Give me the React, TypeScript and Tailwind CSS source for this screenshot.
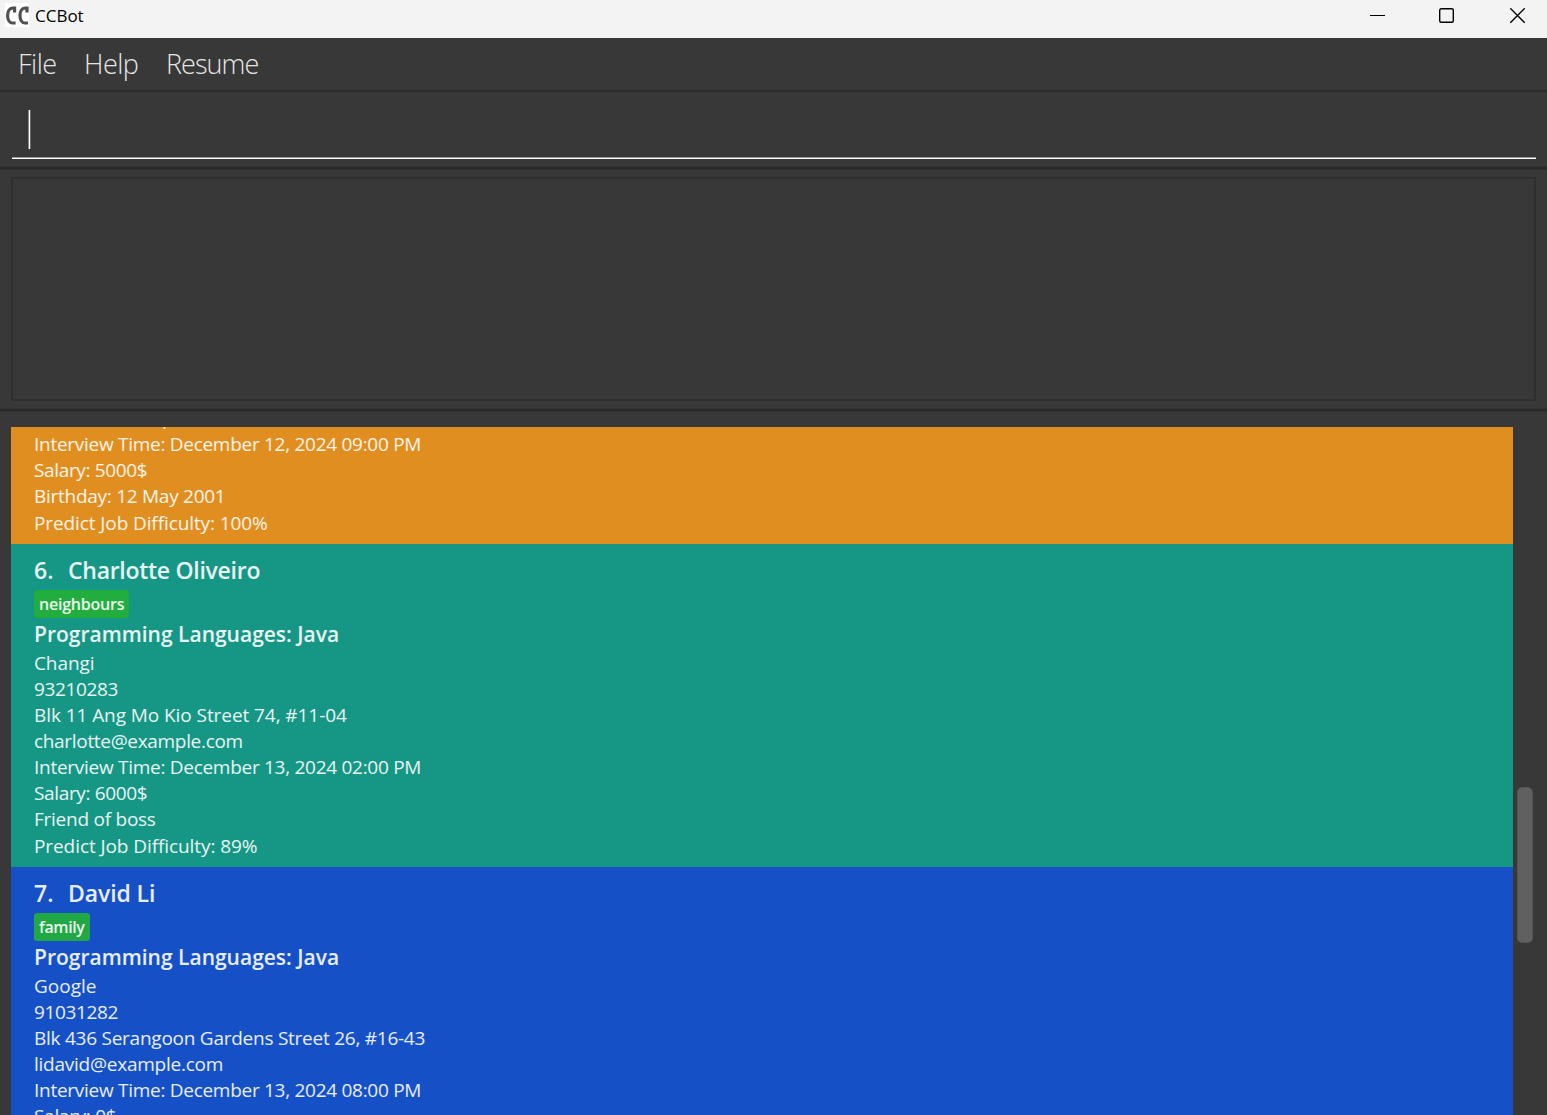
type Line = { text: string; tracking: string };

type Person = {
  id: number;
  name: string;
  nameTracking: string;
  tag: string;
  tagStyle: string;
  color: string;
  fields: Line[];
  difficulty?: Line;
};

const previousFields: Line[] = [
  { text: 'bernice@example.com', tracking: 'tracking-[-0.33px]' },
  { text: 'Interview Time: December 12, 2024 09:00 PM', tracking: 'tracking-[-0.28px]' },
  { text: 'Salary: 5000$', tracking: 'tracking-[-0.35px]' },
  { text: 'Birthday: 12 May 2001', tracking: 'tracking-[-0.27px]' },
];

const people: Person[] = [
  {
    id: 6,
    name: 'Charlotte Oliveiro',
    nameTracking: 'tracking-[-0.28px]',
    tag: 'neighbours',
    tagStyle: 'bg-[#22ad3f] tracking-[-0.22px]',
    color: 'bg-[#169684]',
    fields: [
      { text: 'Changi', tracking: 'tracking-[-0.1px]' },
      { text: '93210283', tracking: 'tracking-[-0.36px]' },
      { text: 'Blk 11 Ang Mo Kio Street 74, #11-04', tracking: 'tracking-[-0.07px]' },
      { text: 'charlotte@example.com', tracking: 'tracking-[-0.32px]' },
      { text: 'Interview Time: December 13, 2024 02:00 PM', tracking: 'tracking-[-0.28px]' },
      { text: 'Salary: 6000$', tracking: 'tracking-[-0.35px]' },
      { text: 'Friend of boss', tracking: 'tracking-[-0.25px]' },
    ],
    difficulty: { text: 'Predict Job Difficulty: 89%', tracking: 'tracking-[-0.08px]' },
  },
  {
    id: 7,
    name: 'David Li',
    nameTracking: 'tracking-[-0.1px]',
    tag: 'family',
    tagStyle: 'bg-[#22a745] tracking-[-0.38px]',
    color: 'bg-[#1650c6]',
    fields: [
      { text: 'Google', tracking: 'tracking-[0px]' },
      { text: '91031282', tracking: 'tracking-[-0.36px]' },
      { text: 'Blk 436 Serangoon Gardens Street 26, #16-43', tracking: 'tracking-[-0.25px]' },
      { text: 'lidavid@example.com', tracking: 'tracking-[-0.24px]' },
      { text: 'Interview Time: December 13, 2024 08:00 PM', tracking: 'tracking-[-0.28px]' },
      { text: 'Salary: 0$', tracking: 'tracking-[-0.3px]' },
    ],
  },
];

function Fields({ lines, difficulty }: { lines: Line[]; difficulty?: Line }) {
  return (
    <div className="flex shrink-0 flex-col text-[19px] leading-[26px]">
      {lines.map((l) => (
        <div key={l.text} className={`whitespace-pre ${l.tracking}`}>
          {l.text}
        </div>
      ))}
      {difficulty && <div className={`whitespace-pre pt-px ${difficulty.tracking}`}>{difficulty.text}</div>}
    </div>
  );
}

function Card({ person }: { person: Person }) {
  return (
    <section className={`h-[323px] shrink-0 overflow-hidden pl-[23px] pt-[9px] text-white/90 ${person.color}`}>
      <h2 className="flex h-[37px] text-[23px] font-semibold leading-[34px]">
        <span className="w-[34px]">{person.id}.</span>
        <span className={person.nameTracking}>{person.name}</span>
      </h2>
      <div className="flex h-7">
        <span className={`rounded-[3px] px-[5px] text-[16px] font-semibold leading-7 ${person.tagStyle}`}>{person.tag}</span>
      </div>
      <h3 className="h-8 text-[21px] font-semibold leading-8">Programming Languages: Java</h3>
      <Fields lines={person.fields} difficulty={person.difficulty} />
    </section>
  );
}

function Divider() {
  return <div className="h-1 shrink-0 border-y border-b-[#303030] border-t-[#333333] bg-[#2a2a2a]" />;
}

export default function App() {
  return (
    <div className="flex h-[1115px] w-[1547px] flex-col overflow-hidden bg-[#383838] font-['Open_Sans',sans-serif]">
      <header className="flex h-[38px] shrink-0 items-start bg-[#f3f3f3] text-black">
        <svg className="ml-[5px] mt-[3px] h-6 w-6 bg-white" viewBox="0 0 24 24" fill="none" stroke="#505050" strokeWidth="3.2">
          <path d="M9.6 9.4V5.2H7.6C4.4 5.2 2.6 8.4 2.6 12.4C2.6 17 4.6 20 7.6 20H10.6" />
          <path d="M22 9.4V5.2H20C16.8 5.2 15 8.4 15 12.4C15 17 17 20 20 20H23" />
        </svg>
        <span className="ml-[6px] text-[17px] leading-8">CCBot</span>
        <svg className="ml-auto mr-[21px] mt-2 h-4 w-[156px]" viewBox="0 0 156 16" fill="none" stroke="#000">
          <path d="M0 7.5H15" />
          <rect x="69.7" y="0.7" width="13.6" height="13.6" rx="1.5" strokeWidth="1.4" />
          <path d="M140.3 0.3L154.7 14.7M154.7 0.3L140.3 14.7" strokeWidth="1.4" />
        </svg>
      </header>

      <nav className="flex h-[54px] shrink-0 border-b-2 border-[#2e2e2e] pl-[18px] text-[27px] font-light leading-[51px] text-[#e6e6e6]">
        <span className="w-[66px] tracking-[-0.5px]">File</span>
        <span className="w-[82px] tracking-[-0.5px]">Help</span>
        <span className="tracking-[-0.95px]">Resume</span>
      </nav>

      <div className="flex h-[74px] shrink-0 flex-col px-3 pr-[11px] pt-[18px]">
        <div className="h-[47px] pl-[16px]">
          <div className="h-[39px] w-[3px] border-x border-l-[#8a8a8a] border-r-[#6a6a6a] bg-white" />
        </div>
        <div className="h-[2px] border-t border-[#9a9a9a] bg-white" />
      </div>
      <Divider />

      <div className="h-[238px] shrink-0 px-[11px] pt-[7px]">
        <div className="h-[224px] border-2 border-[#2e2e2e]" />
      </div>
      <Divider />

      <main className="flex min-h-0 flex-1 pl-[11px] pt-[15px]">
        <div className="flex w-[1502px] flex-col overflow-hidden">
          <section className="flex h-[117px] shrink-0 flex-col justify-end overflow-hidden bg-[#e18e20] pb-2 pl-[23px] text-white/90">
            <Fields
              lines={previousFields}
              difficulty={{ text: 'Predict Job Difficulty: 100%', tracking: 'tracking-[-0.1px]' }}
            />
          </section>
          {people.map((p) => (
            <Card key={p.id} person={p} />
          ))}
        </div>
        <div className="ml-1 mt-[360px] h-[156px] w-4 rounded-[5px] border border-[#545454] bg-[#606060]" />
      </main>
    </div>
  );
}
